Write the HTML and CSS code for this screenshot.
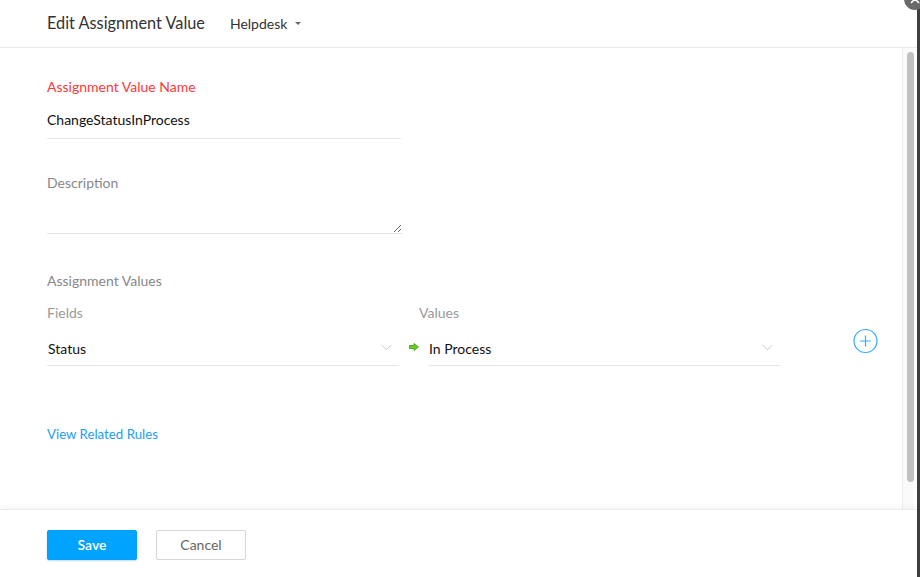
FILE: index.html
```html
<!DOCTYPE html>
<html>
<head>
<meta charset="utf-8">
<link rel="stylesheet" href="styles.css">
</head>
<body>
<div class="app">
  <div class="dialog">
    <div class="header">
      <h1 class="title">Edit Assignment Value</h1>
      <div class="module">Helpdesk <span class="caret"></span></div>
    </div>
    <div class="main">
      <div class="content">
        <div class="label label-req">Assignment Value Name</div>
        <div class="input">ChangeStatusInProcess</div>
        <div class="label label-desc">Description</div>
        <textarea class="textarea"></textarea>
        <div class="section-title">Assignment Values</div>
        <div class="col-labels">
          <div class="col-label col-fields">Fields</div>
          <div class="col-label">Values</div>
        </div>
        <div class="assign-row">
          <div class="select select-field">
            <span>Status</span>
            <svg class="chev" width="11" height="7" viewBox="0 0 11 7"><path d="M0.5 0.8 L5.5 5.8 L10.5 0.8" fill="none" stroke="#c8c8c8" stroke-width="1"/></svg>
          </div>
          <div class="arrow-cell">
            <svg width="10" height="8" viewBox="0 0 10 8"><path d="M0.5 2.5 H5 V0.5 L9.5 4 L5 7.5 V5.5 H0.5 Z" fill="#66cc22" stroke="#3f9a10" stroke-width="0.8"/></svg>
          </div>
          <div class="select select-value">
            <span>In Process</span>
            <svg class="chev" width="11" height="7" viewBox="0 0 11 7"><path d="M0.5 0.8 L5.5 5.8 L10.5 0.8" fill="none" stroke="#c8c8c8" stroke-width="1"/></svg>
          </div>
          <div class="add-btn">
            <svg width="26" height="26" viewBox="0 0 26 26"><circle cx="12.5" cy="13" r="11.5" fill="none" stroke="#33aaff" stroke-width="1.2"/><path d="M7 13 H18 M12.5 7.5 V18.5" stroke="#33aaff" stroke-width="1.2"/></svg>
          </div>
        </div>
        <a class="link" href="#">View Related Rules</a>
      </div>
      <div class="scrollbar"><div class="thumb"></div></div>
      <div class="gap"></div>
    </div>
    <div class="footer">
      <button class="btn btn-primary">Save</button>
      <button class="btn btn-default">Cancel</button>
    </div>
  </div>
  <div class="edge"></div>
  <div class="close">
    <svg width="22" height="22" viewBox="0 0 22 22"><path d="M7 7 L15 15 M15 7 L7 15" stroke="#fff" stroke-width="1.6"/></svg>
  </div>
</div>
</body>
</html>
```

FILE: styles.css
```css
html, body {
  margin: 0;
  padding: 0;
  height: 100%;
  background: #fff;
  font-family: Lato, "Open Sans", "Liberation Sans", sans-serif;
}
.app {
  display: flex;
  height: 577px;
  width: 920px;
  overflow: hidden;
  position: relative;
}
.dialog {
  flex: 1;
  display: flex;
  flex-direction: column;
  min-width: 0;
}
.header {
  height: 47px;
  border-bottom: 1px solid #e8e8e8;
  display: flex;
  align-items: center;
  padding-left: 47px;
  flex: none;
}
.title {
  margin: 0;
  font-size: 16.3px;
  font-weight: 400;
  color: #333;
  margin-top: -2px;
}
.module {
  margin-left: 25px;
  font-size: 14px;
  color: #333;
  display: flex;
  align-items: center;
  margin-top: -1px;
}
.caret {
  display: inline-block;
  width: 0;
  height: 0;
  border-left: 3px solid transparent;
  border-right: 3px solid transparent;
  border-top: 3px solid #666;
  margin-left: 8px;
  margin-top: 1px;
}
.main {
  flex: 1;
  display: flex;
  min-height: 0;
}
.content {
  flex: 1;
  padding: 29px 0 0 47px;
  min-width: 0;
}
.label {
  font-size: 14px;
  line-height: 20px;
}
.label-req {
  color: #ff3838;
}
.label-desc {
  color: #888;
  margin-top: 34px;
}
.input {
  width: 354px;
  margin-top: 13px;
  font-size: 14px;
  line-height: 20px;
  color: #111;
  padding-bottom: 8px;
  border-bottom: 1px solid #e3e5ea;
}
.textarea {
  display: block;
  box-sizing: border-box;
  width: 355px;
  height: 41px;
  margin: 0;
  padding: 0;
  border: none;
  border-bottom: 1px solid #e3e5ea;
  outline: none;
  resize: vertical;
  font-family: inherit;
}
.section-title {
  margin-top: 37px;
  font-size: 14px;
  line-height: 20px;
  color: #888;
}
.col-labels {
  display: flex;
  margin-top: 12px;
}
.col-label {
  font-size: 14px;
  line-height: 20px;
  color: #999;
}
.col-fields {
  width: 372px;
}
.assign-row {
  display: flex;
  align-items: flex-start;
  margin-top: 16px;
}
.select {
  display: flex;
  align-items: center;
  justify-content: space-between;
  box-sizing: border-box;
  height: 27px;
  padding: 0 7px 8px 1px;
  border-bottom: 1px solid #e3e5ea;
  font-size: 14px;
  color: #111;
}
.select .chev {
  margin-top: -1px;
}
.select-field {
  width: 352px;
}
.select-value {
  width: 351px;
  padding-left: 0;
}
.arrow-cell {
  width: 30px;
  display: flex;
  justify-content: flex-start;
  padding-left: 10px;
  box-sizing: border-box;
  padding-top: 4px;
}
.add-btn {
  margin-left: 73px;
  margin-top: -11px;
  line-height: 0;
}
.link {
  display: block;
  margin-top: 58px;
  width: max-content;
  font-size: 13.25px;
  line-height: 20px;
  color: #1aa0f0;
  text-decoration: none;
}
.scrollbar {
  width: 12px;
  flex: none;
  border-left: 1px solid #ececec;
  background: #fafafa;
  box-sizing: border-box;
  padding: 4px 1px 0 4px;
}
.thumb {
  width: 7px;
  height: 430px;
  border-radius: 4px;
  background: #c1c1c1;
}
.gap {
  width: 3px;
  flex: none;
}
.footer {
  height: 68px;
  flex: none;
  border-top: 1px solid #ebebeb;
  box-shadow: 0 -3px 6px rgba(0, 0, 0, 0.03);
  box-sizing: border-box;
  padding: 20px 0 0 47px;
  display: flex;
  align-items: flex-start;
  gap: 19px;
  position: relative;
}
.btn {
  width: 90px;
  height: 30px;
  border-radius: 2px;
  font-family: inherit;
  font-size: 14px;
  line-height: 16px;
  padding: 0 0 1px;
  cursor: pointer;
}
.btn-primary {
  background: #00a4ff;
  border: 1px solid #00a0f8;
  color: #fff;
  font-weight: 600;
  box-shadow: 0 1px 2px rgba(0, 120, 200, 0.25);
}
.btn-default {
  background: #fff;
  border: 1px solid #d6d6d6;
  color: #666;
}
.edge {
  width: 3px;
  flex: none;
  background: #3f3f3f;
}
.close {
  position: absolute;
  right: -6px;
  top: -12px;
  width: 22px;
  height: 22px;
  border-radius: 50%;
  background: #6a6a6a;
  line-height: 0;
}
```
